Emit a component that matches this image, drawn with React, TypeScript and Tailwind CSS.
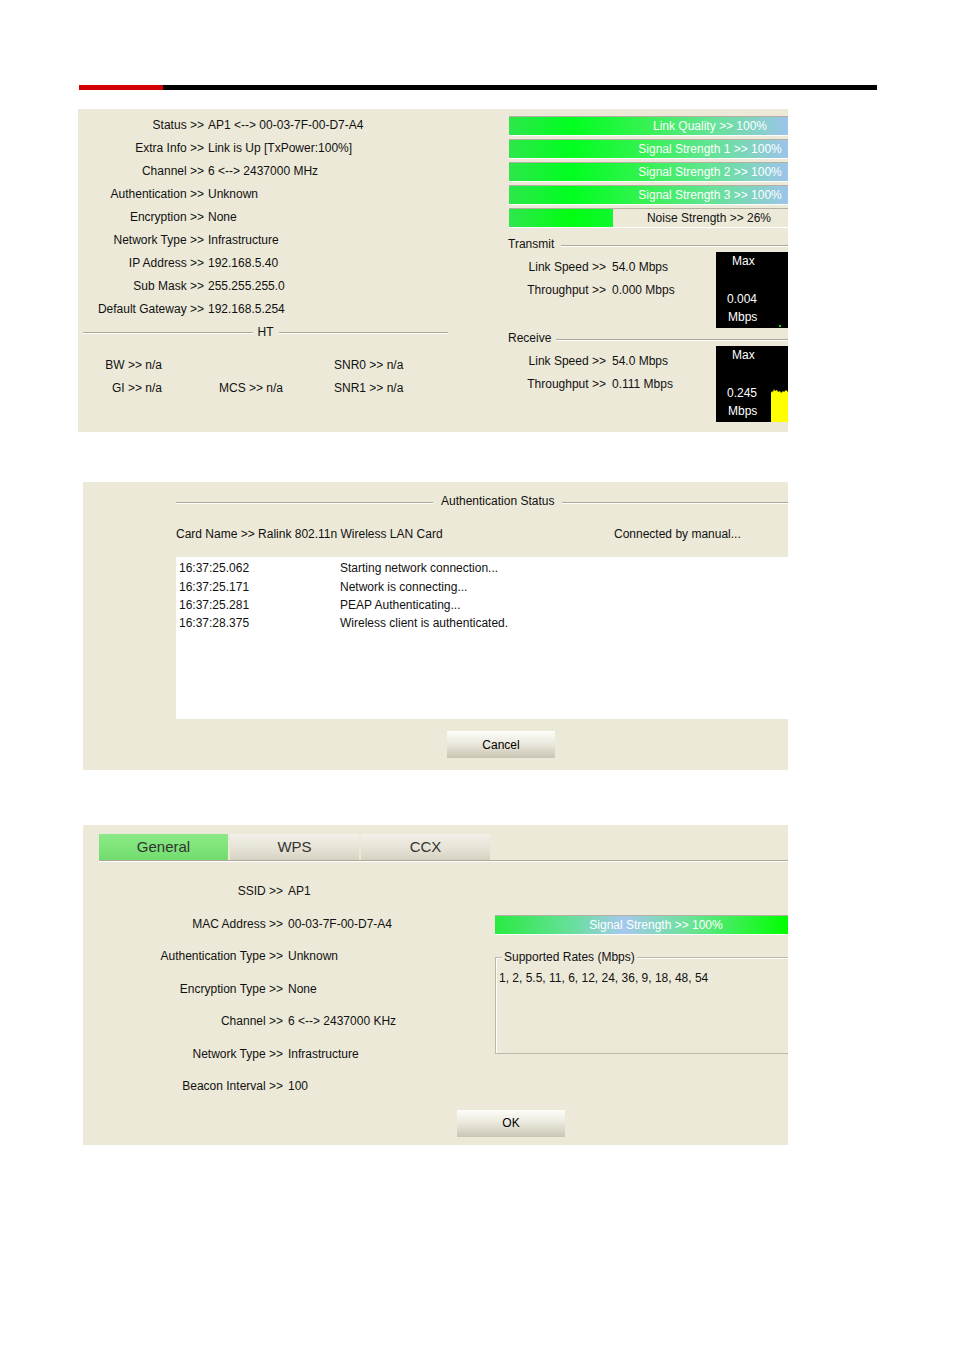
import React from "react";

function Etch({ className = "" }: { className?: string }) {
  return <div className={"h-[2px] border-t border-b border-t-[#aca899] border-b-white " + className} />;
}

function Bar({ text, inner = 402 }: { text: string; inner?: number }) {
  return (
    <div className="h-[20px] overflow-hidden border-t border-b border-t-[#b4b0a0] border-b-white bg-[linear-gradient(to_right,#2ee64c_0%,#00ff1e_22%,#34f250_48%,#62e494_72%,#9cc4ea_100%)]">
      <div className="h-full flex items-center justify-center text-white whitespace-nowrap" style={{ width: inner }}>
        {text}
      </div>
    </div>
  );
}

function Row2({ l, v }: { l: string; v: string }) {
  return (
    <div className="flex h-[23px] items-center whitespace-nowrap">
      <div className="w-[97px] text-right">{l} &gt;&gt;</div>
      <div className="ml-[6px]">{v}</div>
    </div>
  );
}

function Graph({ value, rx }: { value: string; rx: boolean }) {
  return (
    <div className="w-[72px] h-[76px] bg-black relative text-white flex flex-col leading-[16px]">
      <div className="pl-[16px] pt-[1px]">Max</div>
      <div className="pl-[11px] mt-[22px]">{value}</div>
      <div className="pl-[12px] mt-[2px]">Mbps</div>
      {rx ? (
        <svg className="absolute right-0 bottom-0" width="17" height="34" viewBox="0 0 17 34">
          <path d="M0,5 L1,3 L2,4 L3,1 L4,3 L6,2 L7,4 L9,3 L10,5 L12,3 L13,4 L15,2 L17,4 L17,34 L0,34 Z" fill="#ffff00" />
        </svg>
      ) : (
        <div className="absolute left-[63px] bottom-[1px] w-[2px] h-[2px] bg-[#00e000]" />
      )}
    </div>
  );
}

function XpButton({ label }: { label: string }) {
  return (
    <div className="w-[108px] h-[27px] flex items-center justify-center text-black bg-[linear-gradient(to_bottom,#fdfdf9_0%,#eceadf_45%,#c9c5b3_100%)]">
      {label}
    </div>
  );
}

export default function App() {
  const rows1: [string, string][] = [
    ["Status", "AP1 <--> 00-03-7F-00-D7-A4"],
    ["Extra Info", "Link is Up [TxPower:100%]"],
    ["Channel", "6 <--> 2437000 MHz"],
    ["Authentication", "Unknown"],
    ["Encryption", "None"],
    ["Network Type", "Infrastructure"],
    ["IP Address", "192.168.5.40"],
    ["Sub Mask", "255.255.255.0"],
    ["Default Gateway", "192.168.5.254"],
  ];
  const logs: [string, string][] = [
    ["16:37:25.062", "Starting network connection..."],
    ["16:37:25.171", "Network is connecting..."],
    ["16:37:25.281", "PEAP Authenticating..."],
    ["16:37:28.375", "Wireless client is authenticated."],
  ];
  const rows3: [string, string][] = [
    ["SSID", "AP1"],
    ["MAC Address", "00-03-7F-00-D7-A4"],
    ["Authentication Type", "Unknown"],
    ["Encryption Type", "None"],
    ["Channel", "6 <--> 2437000 KHz"],
    ["Network Type", "Infrastructure"],
    ["Beacon Interval", "100"],
  ];

  return (
    <div className="w-[954px] h-[1350px] bg-white pt-[85px] font-['Liberation_Sans',Arial,sans-serif] text-[12px] text-[#111]">
      {/* header rule */}
      <div className="ml-[79px] w-[798px] h-[5px] flex">
        <div className="w-[84px] bg-[#d40000]" />
        <div className="flex-1 bg-black" />
      </div>

      {/* Panel 1 */}
      <div className="ml-[78px] mt-[19px] w-[710px] h-[323px] bg-[#ece9d8] overflow-hidden flex">
        <div className="w-[431px] pt-[4px]">
          {rows1.map(([l, v]) => (
            <div key={l} className="flex h-[23px] items-center whitespace-nowrap">
              <div className="w-[126px] text-right">{l} &gt;&gt;</div>
              <div className="ml-[4px]">{v}</div>
            </div>
          ))}
          <div className="flex h-[23px] items-center ml-[5px] w-[365px]">
            <Etch className="flex-1 mt-[3px]" />
            <span className="px-[5px]">HT</span>
            <Etch className="flex-1 mt-[3px]" />
          </div>
          <div className="mt-[10px] flex h-[23px] items-center whitespace-nowrap">
            <div className="w-[84px] text-right">BW &gt;&gt; n/a</div>
            <div className="ml-[57px] w-[115px]" />
            <div>SNR0 &gt;&gt; n/a</div>
          </div>
          <div className="flex h-[23px] items-center whitespace-nowrap">
            <div className="w-[84px] text-right">GI &gt;&gt; n/a</div>
            <div className="ml-[57px] w-[115px]">MCS &gt;&gt; n/a</div>
            <div>SNR1 &gt;&gt; n/a</div>
          </div>
        </div>

        <div className="w-[279px] pt-[7px] flex flex-col">
          <div className="flex flex-col gap-[3px]">
            <Bar text="Link Quality >> 100%" />
            <Bar text="Signal Strength 1 >> 100%" />
            <Bar text="Signal Strength 2 >> 100%" />
            <Bar text="Signal Strength 3 >> 100%" />
            <div className="h-[20px] relative border-t border-b border-t-[#b4b0a0] border-b-white bg-[#ece9d8]">
              <div className="w-[104px] h-full bg-[linear-gradient(to_right,#30e64e_0%,#00ff10_60%,#10f830_100%)]" />
              <div className="absolute inset-y-0 left-0 w-[400px] flex items-center justify-center whitespace-nowrap">
                Noise Strength &gt;&gt; 26%
              </div>
            </div>
          </div>

          <div className="mt-[8px] h-[16px] flex items-center">
            <span className="-ml-[1px]">Transmit</span>
            <Etch className="flex-1 ml-[7px] mt-[3px]" />
          </div>
          <div className="flex h-[76px]">
            <div className="w-[207px] pt-[3px]">
              <Row2 l="Link Speed" v="54.0 Mbps" />
              <Row2 l="Throughput" v="0.000 Mbps" />
            </div>
            <Graph value="0.004" rx={false} />
          </div>

          <div className="mt-[2px] h-[16px] flex items-center">
            <span className="-ml-[1px]">Receive</span>
            <Etch className="flex-1 ml-[5px] mt-[3px]" />
          </div>
          <div className="flex h-[76px]">
            <div className="w-[207px] pt-[3px]">
              <Row2 l="Link Speed" v="54.0 Mbps" />
              <Row2 l="Throughput" v="0.111 Mbps" />
            </div>
            <Graph value="0.245" rx={true} />
          </div>
        </div>
      </div>

      {/* Panel 2 */}
      <div className="ml-[83px] mt-[50px] w-[705px] h-[288px] bg-[#ece9d8] overflow-hidden pl-[93px] pt-[11px]">
        <div className="flex h-[16px] items-center">
          <Etch className="w-[257px] mt-[4px]" />
          <span className="px-[8px] whitespace-nowrap">Authentication Status</span>
          <Etch className="flex-1 mt-[4px]" />
        </div>
        <div className="mt-[17px] h-[16px] flex items-center whitespace-nowrap">
          <span className="w-[438px]">Card Name &gt;&gt; Ralink 802.11n Wireless LAN Card</span>
          <span>Connected by manual...</span>
        </div>
        <div className="mt-[15px] h-[162px] bg-white pt-[2px]">
          {logs.map(([t, m]) => (
            <div key={t} className="flex h-[18.4px] items-center whitespace-nowrap">
              <div className="pl-[3px] w-[164px]">{t}</div>
              <div>{m}</div>
            </div>
          ))}
        </div>
        <div className="mt-[12px] ml-[271px]">
          <XpButton label="Cancel" />
        </div>
      </div>

      {/* Panel 3 */}
      <div className="ml-[83px] mt-[55px] w-[705px] h-[320px] bg-[#ece9d8] overflow-hidden pt-[9px]">
        <div className="ml-[16px] flex gap-[2px] h-[26px] text-[15px] text-[#333]">
          <div className="w-[129px] flex items-center justify-center bg-[linear-gradient(to_bottom,#8cea88_0%,#7ee47a_50%,#72dc6e_100%)]">General</div>
          <div className="w-[129px] flex items-center justify-center bg-[linear-gradient(to_bottom,#f2f0e8_0%,#e4e1d4_60%,#d6d2c2_100%)]">WPS</div>
          <div className="w-[129px] flex items-center justify-center bg-[linear-gradient(to_bottom,#f2f0e8_0%,#e4e1d4_60%,#d6d2c2_100%)]">CCX</div>
        </div>
        <Etch className="ml-[16px]" />
        <div className="flex mt-[13px]">
          <div className="w-[412px]">
            {rows3.map(([l, v]) => (
              <div key={l} className="flex h-[32.5px] items-center whitespace-nowrap">
                <div className="w-[200px] text-right">{l} &gt;&gt;</div>
                <div className="ml-[5px]">{v}</div>
              </div>
            ))}
          </div>
          <div className="w-[293px] flex flex-col">
            <div className="mt-[40px] h-[20px] overflow-hidden border-t border-b border-t-[#b4b0a0] border-b-white bg-[linear-gradient(to_right,#2aea42_0%,#66e09a_26%,#a4c8ee_44%,#66e490_68%,#00ff00_100%)]">
              <div className="w-[322px] h-full flex items-center justify-center text-white whitespace-nowrap">
                Signal Strength &gt;&gt; 100%
              </div>
            </div>
            <div className="mt-[22px] h-[97px] w-[310px] relative border border-[#bcb9a8] shadow-[inset_1px_1px_0_#ffffff]">
              <div className="absolute -top-[9px] left-[6px] px-[2px] bg-[#ece9d8] leading-[16px] whitespace-nowrap">
                Supported Rates (Mbps)
              </div>
              <div className="pl-[3px] pt-[12px] leading-[16px] whitespace-nowrap">
                1, 2, 5.5, 11, 6, 12, 24, 36, 9, 18, 48, 54
              </div>
            </div>
          </div>
        </div>
        <div className="mt-[7px] ml-[374px]">
          <XpButton label="OK" />
        </div>
      </div>
    </div>
  );
}
